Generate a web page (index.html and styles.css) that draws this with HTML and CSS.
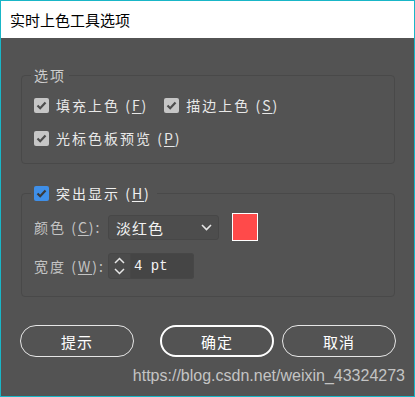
FILE: index.html
```html
<!DOCTYPE html>
<html lang="zh">
<head>
<meta charset="utf-8">
<title>实时上色工具选项</title>
<link rel="stylesheet" href="styles.css">
</head>
<body>
<div class="window">
  <div class="titlebar">实时上色工具选项</div>
  <div class="content">
    <fieldset class="group g1">
      <legend class="legend">选项</legend>
      <div class="row">
        <label class="check first">
          <span class="box"><svg viewBox="0 0 15 15" width="15" height="15"><path d="M3.5 7.5 L6.2 10.2 L11.5 4.6" fill="none" stroke="#4d4d4d" stroke-width="2.2"/></svg></span>
          <span class="lbl">填充上色 (<u>F</u>)</span>
        </label>
        <label class="check">
          <span class="box"><svg viewBox="0 0 15 15" width="15" height="15"><path d="M3.5 7.5 L6.2 10.2 L11.5 4.6" fill="none" stroke="#4d4d4d" stroke-width="2.2"/></svg></span>
          <span class="lbl">描边上色 (<u>S</u>)</span>
        </label>
      </div>
      <div class="row second">
        <label class="check">
          <span class="box"><svg viewBox="0 0 15 15" width="15" height="15"><path d="M3.5 7.5 L6.2 10.2 L11.5 4.6" fill="none" stroke="#4d4d4d" stroke-width="2.2"/></svg></span>
          <span class="lbl">光标色板预览 (<u>P</u>)</span>
        </label>
      </div>
    </fieldset>

    <fieldset class="group g2">
      <legend class="legend legend-check">
        <span class="box blue"><svg viewBox="0 0 15 15" width="15" height="15"><path d="M3.5 7.5 L6.2 10.2 L11.5 4.6" fill="none" stroke="#3a3a3a" stroke-width="2.2"/></svg></span>
        <span class="lbl strong">突出显示 (<u>H</u>)</span>
      </legend>
      <div class="field-row">
        <span class="field-label">颜色 (<u>C</u>):</span>
        <div class="select">
          <span class="select-text">淡红色</span>
          <svg class="chev" viewBox="0 0 11 7" width="11" height="7"><path d="M1 1 L5.5 5.5 L10 1" fill="none" stroke="#e6e6e6" stroke-width="1.6"/></svg>
        </div>
        <div class="swatch"></div>
      </div>
      <div class="field-row second">
        <span class="field-label">宽度 (<u>W</u>):</span>
        <div class="spinner">
          <svg viewBox="0 0 11 7" width="11" height="7"><path d="M1 6 L5.5 1.5 L10 6" fill="none" stroke="#e6e6e6" stroke-width="1.5"/></svg>
          <svg viewBox="0 0 11 7" width="11" height="7"><path d="M1 1 L5.5 5.5 L10 1" fill="none" stroke="#e6e6e6" stroke-width="1.5"/></svg>
        </div>
        <div class="input">4 pt</div>
      </div>
    </fieldset>

    <div class="buttons">
      <button class="btn">提示</button>
      <button class="btn primary">确定</button>
      <button class="btn">取消</button>
    </div>
    <div class="watermark">https://blog.csdn.net/weixin_43324273</div>
  </div>
</div>
</body>
</html>
```

FILE: styles.css
```css
html, body {
  margin: 0;
  padding: 0;
  background: #535353;
}

body {
  font-family: "Noto Sans CJK SC", "Noto Sans", sans-serif;
}

.window {
  width: 415px;
  height: 397px;
  box-sizing: border-box;
  border: 1px solid #19b6c7;
  background: #535353;
  display: flex;
  flex-direction: column;
  overflow: hidden;
}

.titlebar {
  height: 37px;
  background: #ffffff;
  color: #000000;
  font-size: 15px;
  line-height: 37px;
  padding-left: 9px;
}

.content {
  flex: 1;
  padding: 27px 19px 0 20px;
  display: flex;
  flex-direction: column;
}

.group {
  margin: 0;
  min-width: 0;
  border: 1px solid #494949;
  border-radius: 4px;
  padding: 8px 12px 13px;
}

.g2 {
  margin-top: 19px;
  padding: 10px 12px 17px;
}

.legend {
  padding: 0 3px;
  margin-left: -3px;
  font-size: 14px;
  line-height: 20px;
  height: 20px;
  color: #cdcdcd;
  letter-spacing: 2px;
}

.legend-check {
  display: flex;
  align-items: center;
  padding-right: 6px;
}

.row {
  display: flex;
  align-items: center;
  height: 24px;
}

.row.second {
  margin-top: 9px;
}

.check {
  display: flex;
  align-items: center;
}

.check.first {
  margin-right: 16px;
}

.box {
  width: 15px;
  height: 15px;
  border-radius: 2px;
  background: #c6c6c6;
  display: flex;
  flex: none;
}

.box.blue {
  background: #3f8fe8;
}

.lbl {
  margin-left: 7px;
  font-size: 14px;
  line-height: 24px;
  color: #e8e8e8;
  letter-spacing: 2px;
  white-space: nowrap;
}

.lbl.strong {
  line-height: 20px;
  color: #f0f0f0;
}

u {
  text-decoration: underline;
  text-underline-offset: 2px;
}

.field-row {
  display: flex;
  align-items: center;
  height: 28px;
}

.field-row.second {
  margin-top: 12px;
  height: 26px;
}

.field-label {
  width: 74px;
  flex: none;
  font-size: 14px;
  color: #c4c4c4;
  letter-spacing: 2px;
  white-space: nowrap;
}

.select {
  width: 111px;
  height: 25px;
  box-sizing: border-box;
  background: #4d4d4d;
  border: 1px solid #474747;
  border-radius: 3px;
  display: flex;
  align-items: center;
  padding: 0 6px 0 7px;
}

.select-text {
  flex: 1;
  font-size: 15px;
  color: #f2f2f2;
  letter-spacing: 1px;
}

.chev {
  margin-right: 0;
}

.swatch {
  width: 26px;
  height: 28px;
  box-sizing: border-box;
  margin-left: 13px;
  background: #ff4a4a;
  border: 1px solid #ffffff;
}

.spinner {
  width: 23px;
  height: 26px;
  box-sizing: border-box;
  background: #4b4b4b;
  border: 1px solid #474747;
  border-radius: 3px 0 0 3px;
  display: flex;
  flex-direction: column;
  align-items: center;
  justify-content: center;
  gap: 4px;
}

.input {
  width: 63px;
  height: 26px;
  box-sizing: border-box;
  background: #454545;
  border: 1px solid #474747;
  border-left: none;
  border-radius: 0 3px 3px 0;
  padding-left: 3px;
  font-family: "Liberation Mono", "DejaVu Sans Mono", monospace;
  font-size: 14px;
  line-height: 24px;
  color: #f4f4f4;
}

.buttons {
  display: flex;
  margin: 28px -1px 0 -1px;
}

.btn {
  width: 114px;
  height: 32px;
  box-sizing: border-box;
  border: 1.5px solid #e6e6e6;
  border-radius: 16px;
  background: transparent;
  color: #ffffff;
  font-family: "Noto Sans CJK SC", sans-serif;
  font-size: 15px;
  letter-spacing: 1px;
  padding: 0;
}

.btn.primary {
  margin-left: 26px;
  margin-right: 8px;
  border: 2.5px solid #ffffff;
}

.watermark {
  margin: 10px -10px 0 0;
  text-align: right;
  font-family: "Liberation Sans", Arial, sans-serif;
  font-size: 16px;
  line-height: 18px;
  color: #c4c4c4;
}
```
